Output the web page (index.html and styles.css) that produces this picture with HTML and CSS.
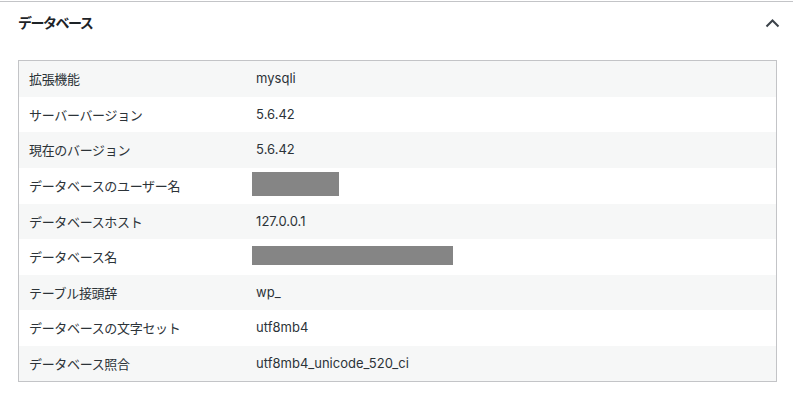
FILE: index.html
```html
<!DOCTYPE html>
<html lang="ja">
<head>
<meta charset="utf-8">
<link rel="stylesheet" href="styles.css">
</head>
<body>
<section class="panel">
  <div class="panel-head">
    <h2 class="panel-title">データベース</h2>
    <svg class="chevron" width="16" height="10" viewBox="0 0 16 10" aria-hidden="true">
      <polyline points="1.5,8.5 7.5,2.5 13.5,8.5" fill="none" stroke="#3c434a" stroke-width="2"/>
    </svg>
  </div>
  <div class="panel-body">
    <table class="info">
      <tbody>
        <tr><td class="label">拡張機能</td><td>mysqli</td></tr>
        <tr><td class="label">サーバーバージョン</td><td>5.6.42</td></tr>
        <tr><td class="label">現在のバージョン</td><td>5.6.42</td></tr>
        <tr><td class="label">データベースのユーザー名</td><td class="redact"><span class="mask" style="width:87px"></span></td></tr>
        <tr><td class="label">データベースホスト</td><td>127.0.0.1</td></tr>
        <tr><td class="label">データベース名</td><td class="redact"><span class="mask mask-tall" style="width:201px"></span></td></tr>
        <tr><td class="label">テーブル接頭辞</td><td>wp_</td></tr>
        <tr><td class="label">データベースの文字セット</td><td>utf8mb4</td></tr>
        <tr><td class="label">データベース照合</td><td>utf8mb4_unicode_520_ci</td></tr>
      </tbody>
    </table>
  </div>
</section>
</body>
</html>
```
FILE: styles.css
```css
* { box-sizing: border-box; }
html, body { margin: 0; padding: 0; background: #fff; }
body {
  font-family: "Inter", "Noto Sans CJK JP", sans-serif;
  color: #1d2327;
  font-size: 13px;
}
.panel {
  padding-top: 1px;
}
.panel-head {
  border-top: 1px solid #c3c4c7;
  height: 43px;
  display: flex;
  align-items: center;
  justify-content: space-between;
  padding: 0 12px 0 18px;
}
.panel-title {
  margin: 0;
  font-size: 14px;
  font-weight: 700;
  line-height: 1.4;
  letter-spacing: -1.5px;
  font-family: "Noto Sans CJK JP", sans-serif;
}
.chevron { display: block; }
.panel-body {
  padding: 16px 16px 0 18px;
}
.info {
  width: 100%;
  border: 1px solid #c3c4c7;
  border-collapse: separate;
  border-spacing: 0;
}
.info td {
  padding: 8px 10px;
  line-height: 1.5;
  vertical-align: top;
  color: #2c3338;
}
.info td.label {
  width: 30%;
  letter-spacing: -0.33px;
  font-family: "Noto Sans CJK JP", sans-serif;
}
.info tr:nth-child(odd) td { background: #f6f7f7; }
.info td.redact { padding-left: 6px; }
.mask {
  display: block;
  height: 24px;
  background: #858585;
  margin-top: -4px;
}
.mask-tall { height: 19px; margin-top: -1px; margin-bottom: 0; }
```
